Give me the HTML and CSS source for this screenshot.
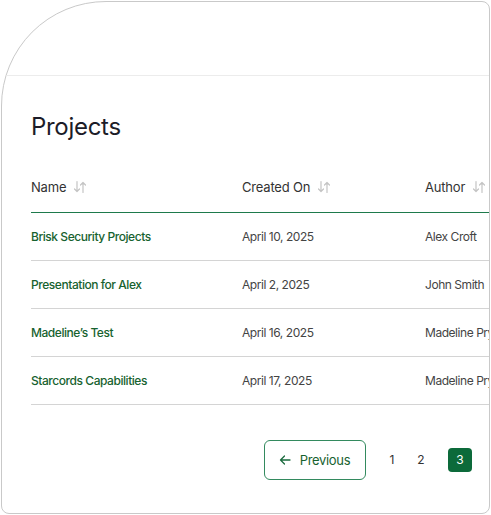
FILE: index.html
```html
<!DOCTYPE html>
<html lang="en">
<head>
<meta charset="utf-8">
<title>Projects</title>
<link rel="stylesheet" href="styles.css">
</head>
<body>
<div class="card">
  <div class="topbar"></div>
  <h1 class="title">Projects</h1>
  <div class="table-wrap">
    <table class="table">
      <thead>
        <tr>
          <th class="col-name"><span class="th-inner">Name <svg class="sort" width="14" height="14" viewBox="0 0 14 14"><path d="M4 1.5v10M1.5 9l2.5 2.5L6.5 9M10 12.5v-10M7.5 5L10 2.5 12.5 5" fill="none" stroke="#c4c4c4" stroke-width="1.2" stroke-linecap="round" stroke-linejoin="round"/></svg></span></th>
          <th class="col-date"><span class="th-inner">Created On <svg class="sort" width="14" height="14" viewBox="0 0 14 14"><path d="M4 1.5v10M1.5 9l2.5 2.5L6.5 9M10 12.5v-10M7.5 5L10 2.5 12.5 5" fill="none" stroke="#c4c4c4" stroke-width="1.2" stroke-linecap="round" stroke-linejoin="round"/></svg></span></th>
          <th class="col-author"><span class="th-inner">Author <svg class="sort" width="14" height="14" viewBox="0 0 14 14"><path d="M4 1.5v10M1.5 9l2.5 2.5L6.5 9M10 12.5v-10M7.5 5L10 2.5 12.5 5" fill="none" stroke="#c4c4c4" stroke-width="1.2" stroke-linecap="round" stroke-linejoin="round"/></svg></span></th>
        </tr>
      </thead>
      <tbody>
        <tr><td><a class="link" href="#">Brisk Security Projects</a></td><td>April 10, 2025</td><td>Alex Croft</td></tr>
        <tr><td><a class="link" href="#">Presentation for Alex</a></td><td>April 2, 2025</td><td>John Smith</td></tr>
        <tr><td><a class="link" href="#">Madeline’s Test</a></td><td>April 16, 2025</td><td>Madeline Pryce</td></tr>
        <tr><td><a class="link" href="#">Starcords Capabilities</a></td><td>April 17, 2025</td><td>Madeline Pryce</td></tr>
      </tbody>
    </table>
  </div>
  <div class="pagination">
    <button class="prev"><svg width="14" height="14" viewBox="0 0 14 14"><path d="M12 7H2.5M6.5 3L2.5 7l4 4" fill="none" stroke="#1a6b3e" stroke-width="1.3" stroke-linecap="round" stroke-linejoin="round"/></svg><span>Previous</span></button>
    <span class="page p1">1</span>
    <span class="page p2">2</span>
    <span class="page p3 active">3</span>
  </div>
</div>
</body>
</html>
```
FILE: styles.css
```css
* { box-sizing: border-box; }
html, body { margin: 0; padding: 0; background: #fff; }
body {
  font-family: Inter, "Noto Sans", "Liberation Sans", sans-serif;
  color: #333;
  width: 491px;
  height: 515px;
  overflow: hidden;
}
.card {
  margin: 1px 0 0 1px;
  width: 489px;
  height: 513px;
  border: 1px solid #c9c9c9;
  border-radius: 105px 8px 8px 8px;
  overflow: hidden;
  background: #fff;
  display: flex;
  flex-direction: column;
}
.topbar {
  height: 74px;
  flex: none;
  border-bottom: 1px solid #ececec;
}
.title {
  margin: 35px 0 0 29px;
  font-size: 24px;
  line-height: 32px;
  font-weight: 400;
  color: #1c1c28;
  letter-spacing: -0.3px;
}
.table-wrap {
  margin: 19px 0 0 29px;
  overflow: hidden;
}
.table {
  border-collapse: collapse;
  table-layout: fixed;
  width: 600px;
}
.col-name { width: 211px; }
.col-date { width: 183px; }
.col-author { width: 206px; }
.table th {
  height: 50px;
  padding: 0;
  text-align: left;
  font-size: 13px;
  font-weight: 400;
  letter-spacing: -0.2px;
  color: #333;
  border-bottom: 1px solid #1e7a4c;
  vertical-align: middle;
}
.th-inner {
  display: inline-flex;
  align-items: center;
  gap: 7px;
}
.sort { display: block; }
.table td {
  height: 48px;
  padding: 0;
  font-size: 12px;
  letter-spacing: -0.45px;
  color: #444;
  border-bottom: 1px solid #d4d4d4;
  white-space: nowrap;
  vertical-align: middle;
}
.link {
  color: #17622f;
  font-weight: 500;
  text-decoration: none;
}
.pagination {
  margin-top: 35px;
  display: flex;
  align-items: center;
  padding-left: 262px;
}
.prev {
  width: 102px;
  height: 40px;
  display: flex;
  align-items: center;
  justify-content: center;
  gap: 8px;
  border: 1px solid #338a5e;
  border-radius: 6px;
  background: #fff;
  color: #17622f;
  font-family: inherit;
  font-size: 13px;
  letter-spacing: -0.35px;
  padding: 0 2px 0 0;
}
.page {
  width: 24px;
  height: 24px;
  display: flex;
  align-items: center;
  justify-content: center;
  font-size: 12px;
  color: #333;
}
.p1 { margin-left: 14px; }
.p2 { margin-left: 5px; }
.p3 { margin-left: 15px; }
.active {
  background: #0c6a3a;
  color: #fff;
  border-radius: 4px;
}
```
